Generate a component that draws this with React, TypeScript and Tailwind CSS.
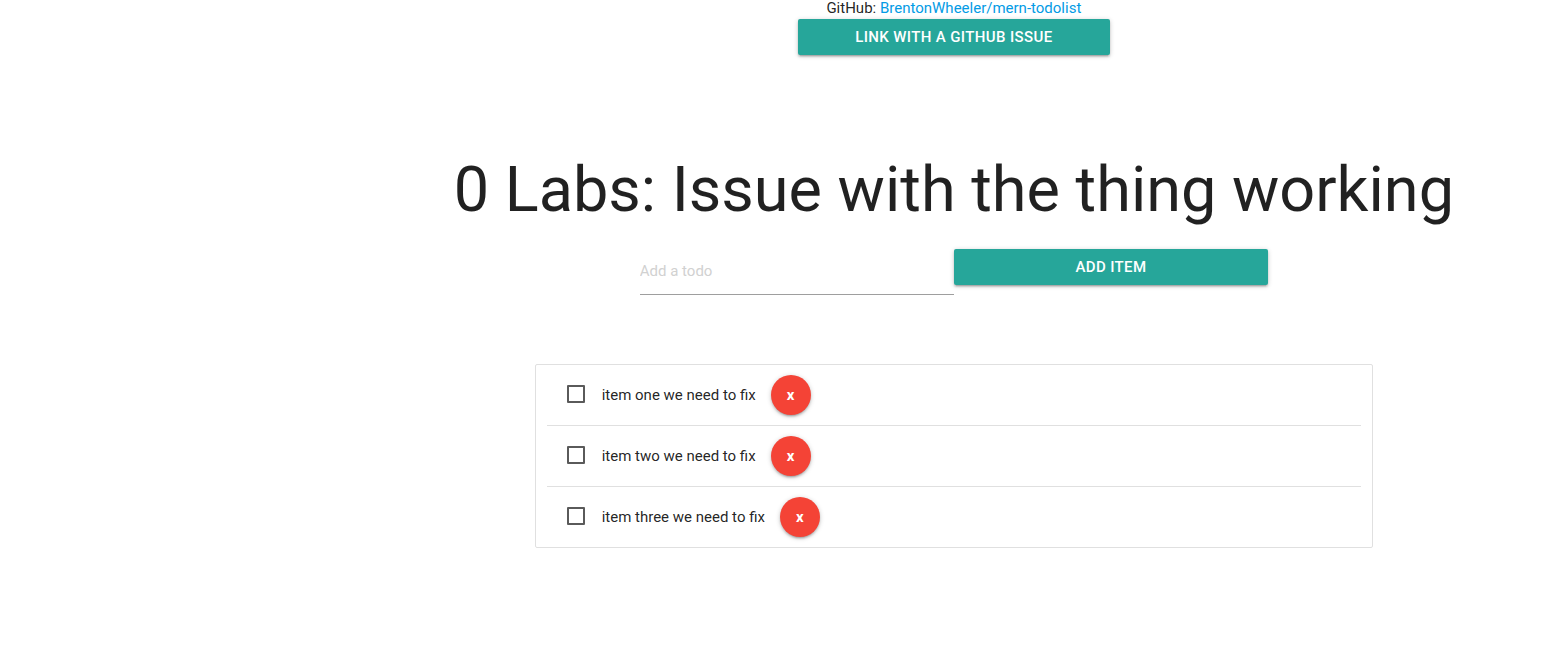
import { useState } from 'react';

const todos = ['item one we need to fix', 'item two we need to fix', 'item three we need to fix'];

const raised = 'shadow-[0_2px_2px_0_rgba(0,0,0,0.14),0_3px_1px_-2px_rgba(0,0,0,0.12),0_1px_5px_0_rgba(0,0,0,0.2)]';

export default function App() {
  const [items, setItems] = useState(todos);
  const [draft, setDraft] = useState('');

  return (
    <main className="ml-[23%] flex flex-col items-center bg-white font-['Roboto',sans-serif] text-[15px] leading-4 text-black/87">
      <p>
        GitHub:{' '}
        <a href="#repo" className="text-[#039be5]">BrentonWheeler/mern-todolist</a>
      </p>
      <button type="button" className={`mt-[3px] h-9 w-[26.1%] rounded-[2px] bg-[#26a69a] font-medium tracking-wide text-white uppercase ${raised}`}>
        Link with a GitHub issue
      </button>
      <h1 className="mt-[100px] text-center text-[63px] leading-[70px]">0 Labs: Issue with the thing working</h1>
      <form
        className="mt-6 flex w-[52.6%] items-start"
        onSubmit={(e) => {
          e.preventDefault();
          if (draft) setItems([...items, draft]);
          setDraft('');
        }}
      >
        <input
          aria-label="Add a todo"
          placeholder="Add a todo"
          value={draft}
          onChange={(e) => setDraft(e.target.value)}
          className="h-[46px] min-w-0 flex-1 border-b border-[#9e9e9e] pb-[2px] outline-none placeholder:text-[#d1d1d1]"
        />
        <button type="submit" className={`h-9 flex-1 rounded-[2px] bg-[#26a69a] font-medium tracking-wide text-white uppercase ${raised}`}>
          Add item
        </button>
      </form>
      <ul className="mt-[69px] w-[70.2%] divide-y divide-[#e0e0e0] rounded-[2px] border border-[#e0e0e0] px-[11px]">
        {items.map((item, i) => (
          <li key={i} className="flex h-[61px] items-center pl-5 last:h-[60px]">
            <label className="flex items-start gap-[17px] leading-5">
              <input type="checkbox" className="size-[18px] appearance-none rounded-[1px] border-2 border-[#5a5a5a] checked:bg-[#26a69a]" />
              {item}
            </label>
            <button
              type="button"
              aria-label={`Remove ${item}`}
              onClick={() => setItems(items.filter((_, n) => n !== i))}
              className={`ml-[15px] size-10 rounded-full bg-[#f44336] font-bold text-white ${raised}`}
            >
              x
            </button>
          </li>
        ))}
      </ul>
    </main>
  );
}
